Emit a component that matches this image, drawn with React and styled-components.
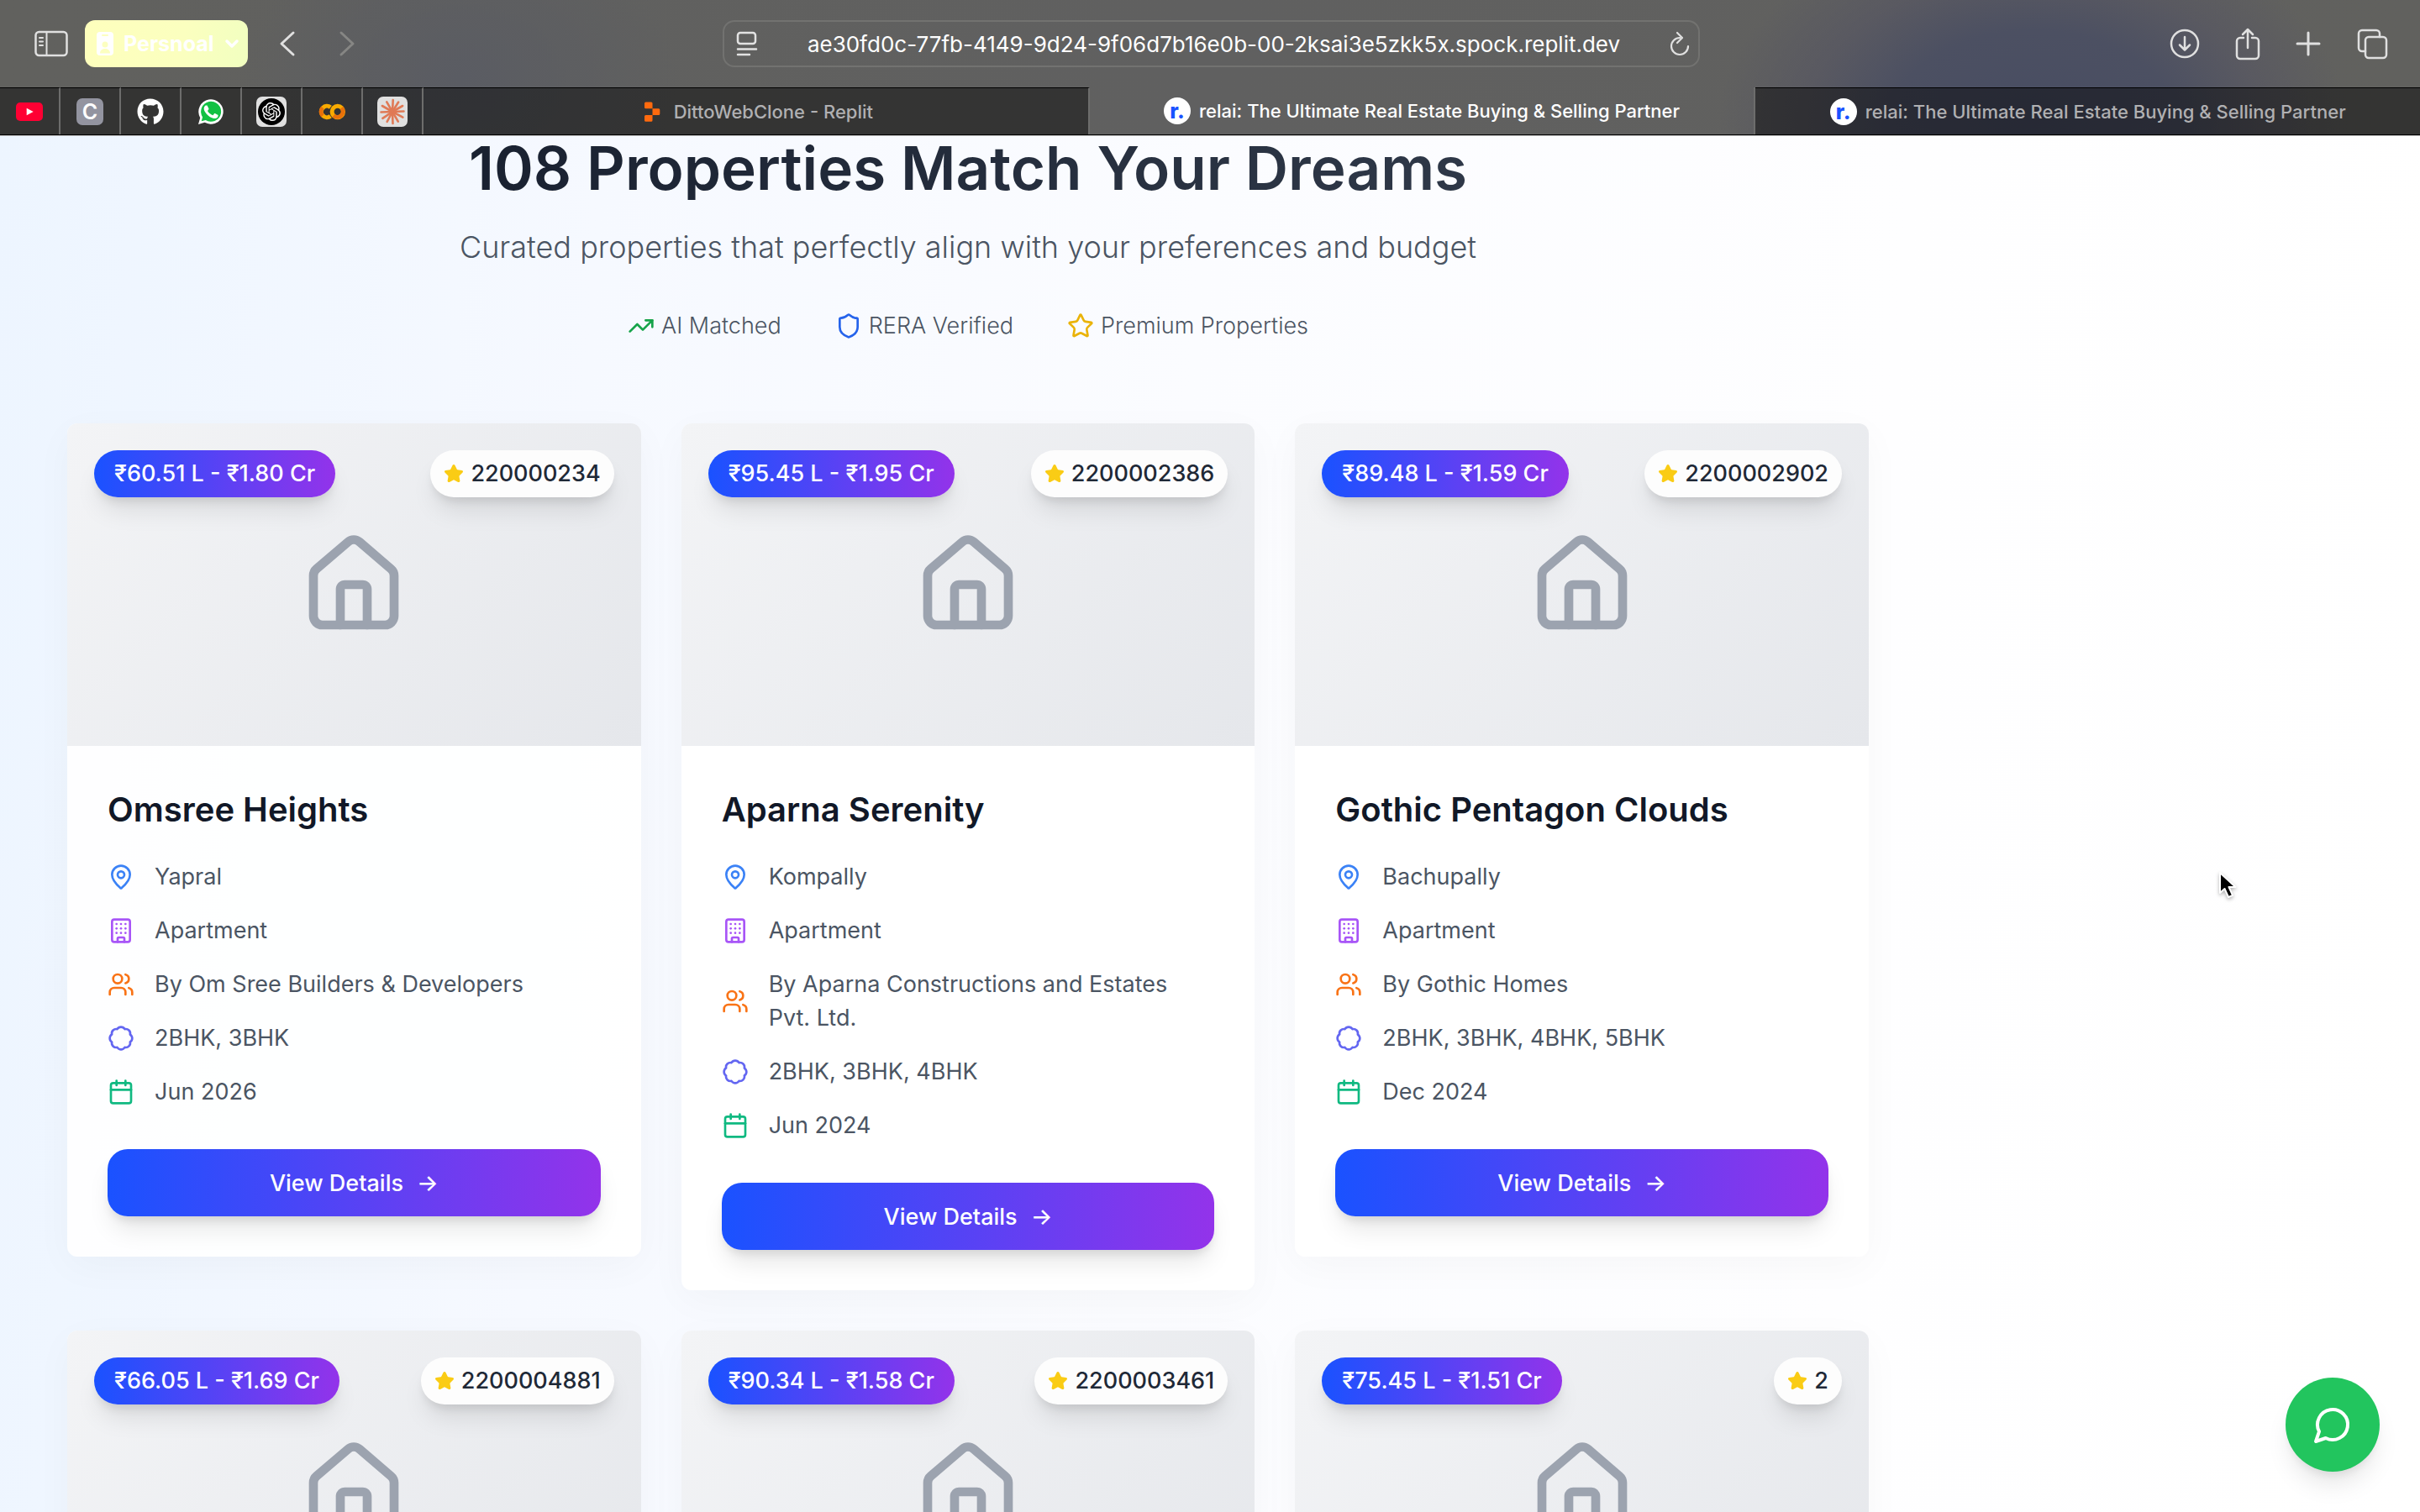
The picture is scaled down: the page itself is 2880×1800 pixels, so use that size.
import React from "react";
import styled, { createGlobalStyle } from "styled-components";
import {
  TrendingUp,
  Shield,
  Star,
  House,
  MapPin,
  Building,
  Calendar,
} from "lucide-react";
import { FaGithub } from "react-icons/fa";
import { SiOpenai } from "react-icons/si";

const GlobalStyle = createGlobalStyle`
  *, *::before, *::after { box-sizing: border-box; }
  body {
    margin: 0;
    background: #ffffff;
    font-family: Inter, "Noto Sans", sans-serif;
    color: #111827;
  }
  button, input { font: inherit; color: inherit; }
  svg { display: block; flex-shrink: 0; }
`;

const Window = styled.div`
  height: 100vh;
  overflow: hidden;
  display: flex;
  flex-direction: column;
`;

/* ---------- browser chrome ---------- */

const Chrome = styled.header`
  flex-shrink: 0;
  border-bottom: 1px solid #bdbdbd;
  background:
    radial-gradient(ellipse 13% 150% at 84% 90%, #484d62 0%, #4c5062 45%, rgba(86, 86, 98, 0.7) 72%, rgba(97, 97, 94, 0) 100%),
    radial-gradient(ellipse 9% 120% at 19% 60%, #5a5c63 0%, rgba(97, 97, 94, 0) 100%),
    linear-gradient(90deg, #61615e, #606060 50%, #61615e);
`;

const Toolbar = styled.div`
  display: grid;
  grid-template-columns: 1fr 41.5% 1fr;
  align-items: center;
  height: 104px;
  padding: 0 38px 0 41px;
`;

const ToolGroup = styled.div`
  display: flex;
  align-items: center;
  justify-content: ${(p) => (p.$end ? "flex-end" : "flex-start")};
  gap: ${(p) => p.$gap}px;
`;

const IconButton = styled.button`
  display: flex;
  padding: 0;
  border: 0;
  background: none;
  color: ${(p) => (p.$dim ? "#868684" : "#e0e0e0")};
`;

const ProfileButton = styled.button`
  display: flex;
  align-items: center;
  gap: 12px;
  height: 56px;
  padding: 0 10px 0 14px;
  border: 0;
  border-radius: 12px;
  background: linear-gradient(100deg, #feffbd 0%, #fbffbf 60%, #f1ffc0 100%);
  color: #ffffff;
  font-size: 25px;
  font-weight: 700;
`;

const AddressBar = styled.div`
  display: flex;
  align-items: center;
  gap: 12px;
  height: 56px;
  padding: 0 10px 0 14px;
  border: 2px solid #727270;
  border-radius: 14px;
  color: #e2e2e2;
`;

const AddressInput = styled.input`
  flex: 1;
  min-width: 0;
  border: 0;
  outline: 0;
  background: none;
  color: #ffffff;
  font-size: 26px;
  text-align: center;
`;

const TabStrip = styled.nav`
  display: flex;
  height: 57px;
  border-bottom: 1px solid #000000;
`;

const PinnedTab = styled.button`
  display: flex;
  align-items: center;
  justify-content: center;
  width: 72px;
  padding: 0;
  border: 0;
  border-top: 1px solid #000000;
  border-right: 2px solid #6d6d6c;
  background: rgba(0, 0, 0, 0.46);
`;

const Tab = styled.button`
  flex: 1;
  display: flex;
  align-items: center;
  justify-content: center;
  gap: 10px;
  padding: 0;
  border: 0;
  border-top: ${(p) => (p.$active ? "0" : "1px solid #000000")};
  border-right: ${(p) => (p.$last ? "0" : "2px solid #6d6d6c")};
  background: ${(p) => (p.$active ? "none" : "rgba(0, 0, 0, 0.46)")};
  color: ${(p) => (p.$active ? "#ffffff" : "#b0b0b2")};
  font-size: 22px;
  font-weight: 500;
  white-space: nowrap;
`;

const LetterTile = styled.span`
  display: grid;
  place-items: center;
  width: 32px;
  height: 32px;
  border-radius: 7px;
  background: #9394a0;
  color: #ffffff;
  font-size: 25px;
  font-weight: 600;
  line-height: 32px;
`;

const LightTile = styled.span`
  display: grid;
  place-items: center;
  width: 36px;
  height: 36px;
  border-radius: 7px;
  background: #e0e0e0;
`;

const RoundMark = styled.span`
  display: grid;
  place-items: center;
  width: 32px;
  height: 32px;
  border-radius: 50%;
  background: ${(p) => p.$bg};
  color: ${(p) => p.$color};
  font-size: 25px;
  font-weight: 800;
  line-height: 28px;
`;

/* ---------- page ---------- */

const Page = styled.main`
  flex: 1;
  min-height: 0;
  background: linear-gradient(94deg, #edf5ff 0%, #f6f9ff 24%, #fbfcff 48%, #fefeff 76%, #ffffff 100%);
`;

const Content = styled.div`
  width: 80%;
  padding: 0 80px;
`;

const Intro = styled.section`
  display: flex;
  flex-direction: column;
  align-items: center;
  margin-bottom: 94px;
  text-align: center;
`;

const Heading = styled.h1`
  align-self: stretch;
  margin: 0 0 24px;
  background: linear-gradient(90deg, #111827, #374151);
  -webkit-background-clip: text;
  background-clip: text;
  color: transparent;
  font-size: 71px;
  font-weight: 600;
  line-height: 76px;
`;

const Subtitle = styled.p`
  margin: 0 0 40px;
  color: #4b5563;
  font-size: 36px;
  font-weight: 300;
  line-height: 64px;
`;

const Traits = styled.ul`
  display: flex;
  gap: 64px;
  margin: 0;
  padding: 0;
  list-style: none;
`;

const Trait = styled.li`
  display: flex;
  align-items: center;
  gap: 8px;
  color: #4b5563;
  font-size: 27px;
  font-weight: 300;
  line-height: 44px;

  svg { color: ${(p) => p.$tint}; }
`;

const CardGrid = styled.section`
  display: grid;
  grid-template-columns: repeat(3, 1fr);
  align-items: start;
  gap: 48px;
`;

const Card = styled.article`
  overflow: hidden;
  border-radius: 12px;
  background: rgba(255, 255, 255, 0.9);
  box-shadow: 0 12px 48px rgba(0, 0, 0, 0.03);
`;

const Cover = styled.div`
  position: relative;
  display: grid;
  place-items: center;
  height: 384px;
  background: linear-gradient(135deg, #f3f4f6, #e5e7eb);
  color: #9ca3af;
`;

const Badge = styled.span`
  position: absolute;
  top: 32px;
  display: flex;
  align-items: center;
  gap: 8px;
  border-radius: 28px;
  font-size: 27px;
  font-weight: 500;
  line-height: 56px;
  box-shadow: 0 20px 30px -6px rgba(0, 0, 0, 0.1), 0 8px 12px -4px rgba(0, 0, 0, 0.1);
`;

const PriceBadge = styled(Badge)`
  left: 32px;
  padding: 0 24px;
  background: linear-gradient(90deg, #1a52ff, #9333ea);
  color: #ffffff;
`;

const CodeBadge = styled(Badge)`
  right: 32px;
  padding: 0 16px;
  background: #fdfdfd;
  color: #1f2937;
`;

const CardBody = styled.div`
  padding: 48px;
`;

const CardTitle = styled.h2`
  margin: 0 0 32px;
  color: #111827;
  font-size: 40px;
  font-weight: 600;
  line-height: 56px;
`;

const Facts = styled.ul`
  display: grid;
  gap: 24px;
  margin: 0 0 48px;
  padding: 0;
  list-style: none;
`;

const Fact = styled.li`
  display: flex;
  align-items: center;
  gap: 24px;
  color: #4b5563;
  font-size: 27px;
  line-height: 40px;

  svg { color: ${(p) => p.$tint}; }
`;

const DetailsButton = styled.button`
  display: flex;
  align-items: center;
  justify-content: center;
  gap: 16px;
  width: 100%;
  height: 80px;
  padding: 0;
  border: 0;
  border-radius: 24px;
  background: linear-gradient(90deg, #1a52ff, #9333ea);
  color: #ffffff;
  font-size: 27px;
  font-weight: 500;
  box-shadow: 0 20px 30px -6px rgba(0, 0, 0, 0.1), 0 8px 12px -4px rgba(0, 0, 0, 0.1);
`;

const ChatButton = styled.button`
  position: fixed;
  right: 48px;
  bottom: 48px;
  display: grid;
  place-items: center;
  width: 112px;
  height: 112px;
  padding: 0;
  border: 0;
  border-radius: 50%;
  background: #22c55e;
  color: #ffffff;
  box-shadow: 0 20px 30px -6px rgba(0, 0, 0, 0.1), 0 8px 12px -4px rgba(0, 0, 0, 0.08);
`;

const Pointer = styled.svg`
  position: fixed;
  left: 91.6%;
  top: 57.6%;
  filter: drop-shadow(0 2px 2px rgba(0, 0, 0, 0.3));
`;

/* ---------- drawings ---------- */

const Line = ({ w, h, sw = 3, children }) => (
  <svg width={w} height={h} viewBox={`0 0 ${w} ${h}`} fill="none" stroke="currentColor" strokeWidth={sw} strokeLinecap="round" strokeLinejoin="round" aria-hidden="true">
    {children}
  </svg>
);

const SidebarIcon = () => (
  <Line w={40} h={32} sw={2.5}>
    <rect x="1.5" y="2" width="37" height="28" rx="4" />
    <path d="M14.5 2v28M6 9h4M6 13.5h4M6 18h4" strokeWidth="2" />
  </Line>
);

const BadgeIcon = () => (
  <svg width="20" height="28" viewBox="0 0 20 28" aria-hidden="true">
    <rect width="20" height="28" rx="4" fill="#fff" />
    <rect x="6" y="3" width="8" height="2" rx="1" fill="#fcffc0" />
    <circle cx="10" cy="15" r="3.500" fill="#fcffc0" />
    <path d="M4 25.500c0-4 3-5.500 6-5.500s6 1.500 6 5.500z" fill="#fcffc0" />
  </svg>
);

const ReaderIcon = () => (
  <Line w={26} h={30} sw={2.5}>
    <rect x="2" y="2" width="21" height="13" rx="3" />
    <path d="M2 21.500h22M2 28h14" />
  </Line>
);

const ReloadIcon = () => (
  <Line w={24} h={30} sw={2.2}>
    <path d="M12 8a10 10 0 1 0 10 10M9 2l6 6-6 6" />
  </Line>
);

const YoutubeIcon = () => (
  <svg width="32" height="22" viewBox="0 0 32 22" aria-hidden="true">
    <rect width="32" height="22" rx="5" fill="#ff0033" />
    <path d="M12.700 6.700v8.600l8-4.300z" fill="#fff" />
  </svg>
);

const WhatsappIcon = () => (
  <svg width="32" height="32" viewBox="0 0 32 32" aria-hidden="true">
    <path d="M1 31l2.200-7.700A14.700 14.700 0 1 1 8.700 28.800z" fill="#fff" />
    <path d="M4.700 27.300l1.400-4.900a12 12 0 1 1 3.700 3.600z" fill="#12c143" />
    <path d="M11.900 9.300c-.3-.7-.6-.7-.9-.7h-.8c-.3 0-.7.1-1.100.5-.4.400-1.400 1.400-1.400 3.400s1.500 4 1.700 4.200c.2.300 2.900 4.600 7.100 6.200 3.500 1.400 4.200 1.100 5 1 .8-.1 2.500-1 2.800-2 .3-1 .3-1.800.2-2-.1-.2-.4-.3-.8-.5l-2.800-1.300c-.4-.1-.7-.2-.9.2l-1.300 1.600c-.2.300-.5.300-.9.100-.4-.2-1.700-.6-3.300-2-1.200-1.100-2-2.400-2.300-2.800-.2-.4 0-.6.2-.8l.6-.7.4-.7c.1-.3.1-.5 0-.7z" fill="#fff" />
  </svg>
);

const ColabIcon = () => (
  <svg width="32" height="20" viewBox="0 0 32 20" fill="none" strokeWidth="5" aria-hidden="true">
    <path d="M14.300 15.200A6.700 6.700 0 1 1 14.300 4.800" stroke="#f9ab00" />
    <path d="M5 14.700A6.700 6.700 0 0 1 5 5.300" stroke="#e8710a" />
    <circle cx="22.800" cy="10" r="6.700" stroke="#f9ab00" />
    <path d="M18 14.700A6.700 6.700 0 0 0 27.500 5.300" stroke="#e8710a" />
  </svg>
);

const rays = [3, 32, 60, 88, 118, 150, 178, 208, 236, 268, 300, 330];

const ClaudeIcon = () => (
  <svg width="32" height="32" viewBox="-16 -16 32 32" stroke="#e07a56" strokeWidth="2.600" strokeLinecap="round" aria-hidden="true">
    {rays.map((a, i) => (
      <line key={a} x1="0" y1="0" x2="0" y2={i % 2 ? -13.5 : -14} transform={`rotate(${a})`} />
    ))}
  </svg>
);

const ReplitIcon = () => (
  <svg width="32" height="32" viewBox="0 0 32 32" fill="#ff6a0e" aria-hidden="true">
    <path d="M7 6a1.500 1.500 0 0 1 1.500-1.500h6.500A1.500 1.500 0 0 1 16.500 6v6.200H8.500A1.500 1.500 0 0 1 7 10.700zM16.500 12.200h7.300a1.500 1.500 0 0 1 1.500 1.500v4.800a1.500 1.500 0 0 1-1.500 1.500h-7.300zM7 21.500A1.500 1.500 0 0 1 8.500 20h8v6.200a1.500 1.500 0 0 1-1.500 1.500H8.500A1.500 1.500 0 0 1 7 26.200z" />
  </svg>
);

const Scallop = () => (
  <svg width="32" height="32" viewBox="0 0 24 24" fill="none" stroke="currentColor" strokeWidth="2" strokeLinecap="round" strokeLinejoin="round" aria-hidden="true">
    <path d="M3.850 8.620a4 4 0 0 1 4.780-4.770 4 4 0 0 1 6.740 0 4 4 0 0 1 4.780 4.780 4 4 0 0 1 0 6.740 4 4 0 0 1-4.770 4.780 4 4 0 0 1-6.750 0 4 4 0 0 1-4.780-4.770 4 4 0 0 1 0-6.760Z" />
  </svg>
);

const People = () => (
  <svg width="32" height="32" viewBox="0 0 24 24" fill="none" stroke="currentColor" strokeWidth="2" strokeLinecap="round" strokeLinejoin="round" aria-hidden="true">
    <path d="M16 21v-2a4 4 0 0 0-4-4H6a4 4 0 0 0-4 4v2" />
    <circle cx="9" cy="7" r="4" />
    <path d="M22 21v-2a4 4 0 0 0-3-3.870M16 3.130a4 4 0 0 1 0 7.750" />
  </svg>
);

const ChatIcon = () => (
  <svg width="48" height="48" viewBox="0 0 24 24" fill="none" stroke="currentColor" strokeWidth="2" strokeLinecap="round" strokeLinejoin="round" aria-hidden="true">
    <path d="M7.900 20A9 9 0 1 0 4 16.100L2 22Z" />
  </svg>
);

/* ---------- data ---------- */

const properties = [
  { price: "₹60.51 L - ₹1.80 Cr", code: "220000234", name: "Omsree Heights", area: "Yapral", type: "Apartment", builder: "By Om Sree Builders & Developers", units: "2BHK, 3BHK", ready: "Jun 2026" },
  { price: "₹95.45 L - ₹1.95 Cr", code: "2200002386", name: "Aparna Serenity", area: "Kompally", type: "Apartment", builder: "By Aparna Constructions and Estates Pvt. Ltd.", units: "2BHK, 3BHK, 4BHK", ready: "Jun 2024" },
  { price: "₹89.48 L - ₹1.59 Cr", code: "2200002902", name: "Gothic Pentagon Clouds", area: "Bachupally", type: "Apartment", builder: "By Gothic Homes", units: "2BHK, 3BHK, 4BHK, 5BHK", ready: "Dec 2024" },
  { price: "₹66.05 L - ₹1.69 Cr", code: "2200004881" },
  { price: "₹90.34 L - ₹1.58 Cr", code: "2200003461" },
  { price: "₹75.45 L - ₹1.51 Cr", code: "2" },
];

function PropertyCard({ item }) {
  return (
    <Card>
      <Cover>
        <House size={128} />
        <PriceBadge>{item.price}</PriceBadge>
        <CodeBadge>
          <Star size={24} color="#facc15" fill="#facc15" />
          {item.code}
        </CodeBadge>
      </Cover>
      {item.name && (
        <CardBody>
          <CardTitle>{item.name}</CardTitle>
          <Facts>
            <Fact $tint="#3b82f6"><MapPin size={32} />{item.area}</Fact>
            <Fact $tint="#a855f7"><Building size={32} />{item.type}</Fact>
            <Fact $tint="#f97316"><People />{item.builder}</Fact>
            <Fact $tint="#6366f1"><Scallop />{item.units}</Fact>
            <Fact $tint="#10b981"><Calendar size={32} />{item.ready}</Fact>
          </Facts>
          <DetailsButton>
            View Details <span>→</span>
          </DetailsButton>
        </CardBody>
      )}
    </Card>
  );
}

const relaiTitle = "relai: The Ultimate Real Estate Buying & Selling Partner";

export default function App() {
  return (
    <Window>
      <GlobalStyle />
      <Chrome>
        <Toolbar>
          <ToolGroup $gap={20}>
            <IconButton><SidebarIcon /></IconButton>
            <ProfileButton>
              <BadgeIcon />
              Persnoal
              <Line w={18} h={12} sw={3.5}><path d="M3 3l6 6 6-6" /></Line>
            </ProfileButton>
            <ToolGroup $gap={32}>
              <IconButton><Line w={56} h={32}><path d="M34 3L20 16l14 13" /></Line></IconButton>
              <IconButton $dim><Line w={20} h={32}><path d="M3 3l14 13L3 29" /></Line></IconButton>
            </ToolGroup>
          </ToolGroup>
          <AddressBar>
            <ReaderIcon />
            <AddressInput aria-label="Address" readOnly value="ae30fd0c-77fb-4149-9d24-9f06d7b16e0b-00-2ksai3e5zkk5x.spock.replit.dev" />
            <IconButton><ReloadIcon /></IconButton>
          </AddressBar>
          <ToolGroup $end $gap={42}>
            <IconButton>
              <Line w={36} h={36} sw={2.5}><circle cx="18" cy="18" r="16" /><path d="M18 10v15M12 19.500l6 6 6-6" /></Line>
            </IconButton>
            <IconButton>
              <Line w={30} h={40} sw={2.5}><path d="M10 13H6a4 4 0 0 0-4 4v17a4 4 0 0 0 4 4h18a4 4 0 0 0 4-4V17a4 4 0 0 0-4-4h-4M15 25V3M9 9l6-6 6 6" /></Line>
            </IconButton>
            <IconButton>
              <Line w={30} h={30}><path d="M15 2v26M2 15h26" /></Line>
            </IconButton>
            <IconButton>
              <Line w={38} h={38} sw={2.5}><rect x="11" y="11" width="25" height="25" rx="4" /><path d="M11 28H7a4 4 0 0 1-4-4V7a4 4 0 0 1 4-4h17a4 4 0 0 1 4 4v4" /></Line>
            </IconButton>
          </ToolGroup>
        </Toolbar>
        <TabStrip>
          <PinnedTab><YoutubeIcon /></PinnedTab>
          <PinnedTab><LetterTile>C</LetterTile></PinnedTab>
          <PinnedTab><FaGithub size={32} color="#ffffff" /></PinnedTab>
          <PinnedTab><WhatsappIcon /></PinnedTab>
          <PinnedTab>
            <LightTile><RoundMark $bg="#000000" $color="#ffffff"><SiOpenai size={22} /></RoundMark></LightTile>
          </PinnedTab>
          <PinnedTab><ColabIcon /></PinnedTab>
          <PinnedTab><LightTile><ClaudeIcon /></LightTile></PinnedTab>
          <Tab><ReplitIcon />DittoWebClone - Replit</Tab>
          <Tab $active><RoundMark $bg="#ffffff" $color="#1a52ff">r.</RoundMark>{relaiTitle}</Tab>
          <Tab $last><RoundMark $bg="#ffffff" $color="#1a52ff">r.</RoundMark>{relaiTitle}</Tab>
        </TabStrip>
      </Chrome>

      <Page>
        <Content>
          <Intro>
            <Heading>108 Properties Match Your Dreams</Heading>
            <Subtitle>Curated properties that perfectly align with your preferences and budget</Subtitle>
            <Traits>
              <Trait $tint="#16a34a"><TrendingUp size={32} />AI Matched</Trait>
              <Trait $tint="#2563eb"><Shield size={32} />RERA Verified</Trait>
              <Trait $tint="#eab308"><Star size={32} />Premium Properties</Trait>
            </Traits>
          </Intro>
          <CardGrid>
            {properties.map((item) => (
              <PropertyCard key={item.code} item={item} />
            ))}
          </CardGrid>
        </Content>
      </Page>

      <ChatButton aria-label="Chat"><ChatIcon /></ChatButton>
      <Pointer width="28" height="36" viewBox="0 0 28 36" aria-hidden="true">
        <path d="M4 2v24l5.500-5 4.500 10 5-2.200-4.500-9.800h8z" fill="#000" stroke="#fff" strokeWidth="2" strokeLinejoin="round" />
      </Pointer>
    </Window>
  );
}
